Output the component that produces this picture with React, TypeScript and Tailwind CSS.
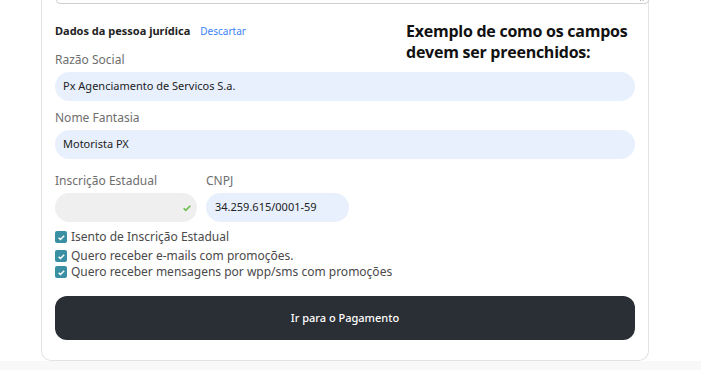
import React from "react";

const Check = () => (
  <span className="w-[12px] h-[12px] rounded-[2px] bg-[#3a8fa3] flex items-center justify-center shrink-0">
    <svg viewBox="0 0 12 12" className="w-[9px] h-[9px]">
      <path d="M2.2 6.2l2.4 2.4 5-5" fill="none" stroke="#fff" strokeWidth="1.9" />
    </svg>
  </span>
);

const CheckRow = ({ label }: { label: string }) => (
  <label className="flex items-center gap-[4px] text-[12px] text-[#4a4a4a] leading-[16px]">
    <Check />
    <span>{label}</span>
  </label>
);

const Field = ({ label, value }: { label: string; value: string }) => (
  <div className="flex flex-col">
    <span className="text-[12px] text-[#6e6e6e] leading-[16px] mb-[4px]">{label}</span>
    <div className="h-[29px] rounded-[15px] bg-[#e8f0fe] flex items-center px-[8px] text-[11px] text-[#222]">
      {value}
    </div>
  </div>
);

export default function App() {
  return (
    <div
      className="w-[701px] h-[370px] bg-white overflow-hidden flex flex-col"
      style={{ fontFamily: "'Noto Sans', 'Open Sans', sans-serif" }}
    >
      <div className="relative ml-[41px] w-[608px] h-[361px] border-x border-b border-[#e3e3e3] rounded-b-[10px] px-[13px] flex flex-col">
        <div className="absolute left-[14px] -right-[1px] -top-[20px] h-[24px] border border-[#cfcfcf] rounded-b-[4px]">
          <svg viewBox="0 0 8 8" className="absolute right-[2px] bottom-[1px] w-[7px] h-[7px]">
            <path d="M7 1L1 7M7 4L4 7" stroke="#888" strokeWidth="0.8" />
          </svg>
        </div>

        <div className="flex mt-[18px] h-[34px]">
          <div className="flex items-start gap-[10px] pt-[6px] w-[351px]">
            <span className="text-[11px] font-bold text-[#222] leading-[14px]">Dados da pessoa jurídica</span>
            <span className="text-[10px] text-[#3b82f6] leading-[14px]">Descartar</span>
          </div>
          <div
            className="text-[16px] font-bold text-[#111] leading-[21px] whitespace-nowrap tracking-[-0.25px] mt-[3px]"
            style={{ fontFamily: "'Open Sans', sans-serif" }}
          >
            <div>Exemplo de como os campos</div>
            <div>devem ser preenchidos:</div>
          </div>
        </div>

        <Field label="Razão Social" value="Px Agenciamento de Servicos S.a." />
        <div className="mt-[9px]">
          <Field label="Nome Fantasia" value="Motorista PX" />
        </div>

        <div className="flex gap-[9px] mt-[14px]">
          <div className="flex flex-col w-[142px]">
            <span className="text-[12px] text-[#6e6e6e] leading-[16px] mb-[4px]">Inscrição Estadual</span>
            <div className="h-[29px] rounded-[15px] bg-[#efefef] flex items-center justify-end pr-[5px]">
              <svg viewBox="0 0 12 12" className="w-[10px] h-[10px]">
                <path d="M2 6.3l2.5 2.5L10 3.3" fill="none" stroke="#6abf4b" strokeWidth="2" />
              </svg>
            </div>
          </div>
          <div className="flex flex-col w-[143px]">
            <span className="text-[12px] text-[#6e6e6e] leading-[16px] mb-[4px]">CNPJ</span>
            <div className="h-[29px] rounded-[15px] bg-[#e8f0fe] flex items-center px-[9px] text-[11px] text-[#222]">
              34.259.615/0001-59
            </div>
          </div>
        </div>

        <div className="flex flex-col mt-[7px]">
          <CheckRow label="Isento de Inscrição Estadual" />
          <div className="flex flex-col mt-[3px]">
            <CheckRow label="Quero receber e-mails com promoções." />
            <CheckRow label="Quero receber mensagens por wpp/sms com promoções" />
          </div>
        </div>

        <button className="mt-[16px] h-[44px] rounded-[12px] bg-[#2a2e35] text-white text-[11px] font-medium">
          Ir para o Pagamento
        </button>
      </div>
      <div className="flex-1 bg-[#f8f8f8]" />
    </div>
  );
}
